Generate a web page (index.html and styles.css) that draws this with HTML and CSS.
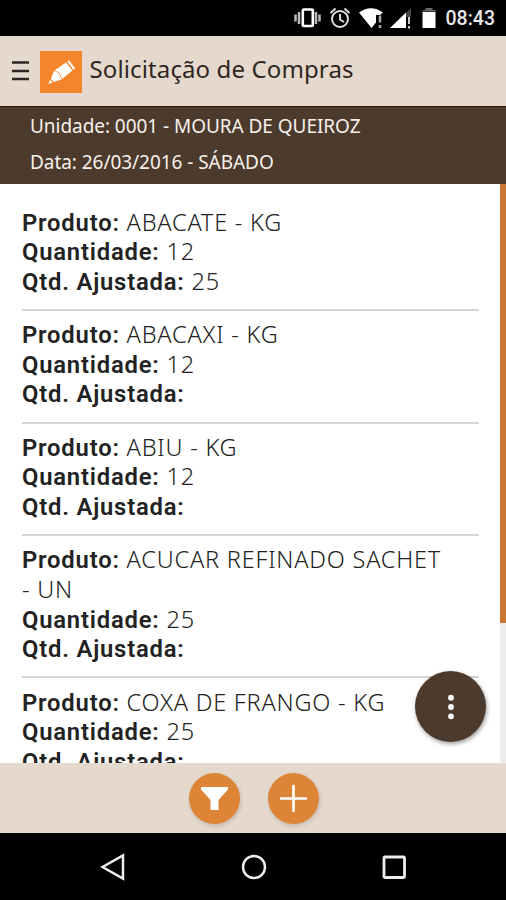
FILE: index.html
```html
<!DOCTYPE html>
<html lang="pt-BR">
<head>
    <meta charset="UTF-8">
    <meta name="viewport" content="width=device-width, initial-scale=1.0">
    <title>Solicitação de Compras</title>
    <link rel="stylesheet" href="styles.css">
</head>
<body>
    <div class="status-bar">
        <svg class="status-icons" width="146" height="36" viewBox="292 0 146 36">
            <!-- vibrate -->
            <path d="M295.500 14.500v7M299 12v12M316 12v12M319.500 14.500v7" stroke="#bbb" stroke-width="2.500"/>
            <rect x="302.800" y="9.500" width="10" height="16.500" rx="1" fill="none" stroke="#fff" stroke-width="2.600"/>
            <!-- alarm -->
            <g fill="none" stroke="#ddd" stroke-width="2">
                <circle cx="340" cy="19" r="8"/>
                <path d="M340 14v5.500l4 2.500M330.500 13l5-4.500M349.500 13l-5-4.500"/>
            </g>
            <!-- wifi -->
            <path d="M359 12.500Q371 4 383 12.500L380 15H376V22.500L371.500 28Z" fill="#fff"/>
            <path d="M380 15.500v7M380 25v3" stroke="#aaa" stroke-width="2.500"/>
            <!-- signal -->
            <path d="M411 8v9h-5v-4z" fill="#444"/>
            <path d="M390 28L406 12.500V28Z" fill="#fff"/>
            <path d="M409 17v7M409 26v2.500" stroke="#ccc" stroke-width="2"/>
            <!-- battery -->
            <path d="M422.500 11.500V10h3V8h7v2h3v1.500z" fill="#666"/>
            <path d="M422.500 12h13v16h-13z" fill="#fff"/>
        </svg>
        <span class="clock">08:43</span>
    </div>

    <div class="header">
        <svg class="menu" width="17" height="20" viewBox="0 0 17 20">
            <path d="M0 1.500h17M0 10h17M0 18h17" stroke="#2d2622" stroke-width="2.400"/>
        </svg>
        <div class="logo">
            <svg width="42" height="42" viewBox="0 0 42 42" fill="#fff">
                <path d="M8.500 33l1.500-4.500 2.500 3z"/>
                <path d="M11 27.500l3-7.500 4 1.500 2 3 1.500 4-8 2.500z"/>
                <path d="M14.500 19.500L26 11.500l6.500 8L22 28l-1.300-4-2.200-3z"/>
                <path d="M27.300 10.500l1.700-1.300 6.200 8.200-1.700 1.400z"/>
            </svg>
        </div>
        <h1 class="title">Solicitação de Compras</h1>
    </div>

    <div class="info">
        <p class="unit">Unidade: 0001 - MOURA DE QUEIROZ</p>
        <p class="date">Data: 26/03/2016 - SÁBADO</p>
    </div>

    <div class="content">
        <div class="list">
            <div class="item">
                <div><b>Produto:</b> ABACATE - KG</div>
                <div><b>Quantidade:</b> 12</div>
                <div><b>Qtd. Ajustada:</b> 25</div>
            </div>
            <div class="item">
                <div><b>Produto:</b> ABACAXI - KG</div>
                <div><b>Quantidade:</b> 12</div>
                <div><b>Qtd. Ajustada:</b></div>
            </div>
            <div class="item">
                <div><b>Produto:</b> ABIU - KG</div>
                <div><b>Quantidade:</b> 12</div>
                <div><b>Qtd. Ajustada:</b></div>
            </div>
            <div class="item">
                <div><b>Produto:</b> ACUCAR REFINADO SACHET - UN</div>
                <div><b>Quantidade:</b> 25</div>
                <div><b>Qtd. Ajustada:</b></div>
            </div>
            <div class="item">
                <div><b>Produto:</b> COXA DE FRANGO - KG</div>
                <div><b>Quantidade:</b> 25</div>
                <div><b>Qtd. Ajustada:</b></div>
            </div>
        </div>
        <div class="scrollbar"><div class="thumb"></div></div>
        <button class="more" aria-label="Mais">
            <svg width="8" height="28" viewBox="0 0 8 28" fill="#fff">
                <circle cx="4" cy="4.700" r="2.900"/>
                <circle cx="4" cy="14" r="2.900"/>
                <circle cx="4" cy="23.300" r="2.900"/>
            </svg>
        </button>
    </div>

    <div class="toolbar">
        <button class="round" aria-label="Filtrar">
            <svg width="51" height="51" viewBox="0 0 51 51">
                <path d="M12 14h27v2.500L29.500 27v10h-8V27L12 16.500z" fill="#fff"/>
            </svg>
        </button>
        <button class="round" aria-label="Adicionar">
            <svg width="51" height="51" viewBox="0 0 51 51">
                <path d="M25.500 13v25M13 25.500h25" stroke="#fff" stroke-width="2.600" stroke-linecap="round"/>
            </svg>
        </button>
    </div>

    <div class="nav-bar">
        <svg width="26" height="28" viewBox="0 0 26 28" fill="none" stroke="#eee" stroke-width="2.500">
            <path d="M2.500 14L23 2.500v23z"/>
        </svg>
        <svg width="26" height="28" viewBox="0 0 26 28" fill="none" stroke="#eee" stroke-width="2.500">
            <circle cx="13" cy="14" r="11"/>
        </svg>
        <svg width="26" height="28" viewBox="0 0 26 28" fill="none" stroke="#eee" stroke-width="2.800">
            <rect x="3" y="4" width="20.500" height="20.500" rx="1"/>
        </svg>
    </div>
</body>
</html>
```

FILE: styles.css
```css
* {
    box-sizing: border-box;
}
body {
    margin: 0;
    height: 900px;
    display: flex;
    flex-direction: column;
    overflow: hidden;
    background-color: #fff;
    font-family: "Noto Sans", sans-serif;
}
button {
    border: none;
    padding: 0;
    border-radius: 50%;
    display: flex;
    align-items: center;
    justify-content: center;
}
.status-bar {
    height: 36px;
    flex: none;
    display: flex;
    align-items: center;
    justify-content: flex-end;
    gap: 8px;
    padding-right: 11px;
    background-color: #000;
}
.clock {
    color: #e8e8e8;
    font: 500 19.5px/36px Roboto, sans-serif;
    padding-top: 2px;
}
.header {
    height: 70px;
    flex: none;
    display: flex;
    align-items: center;
    padding: 2px 0 0 12px;
    background-color: #e5d9ce;
}
.menu {
    margin-top: -2px;
}
.logo {
    width: 42px;
    height: 42px;
    margin-left: 11px;
    background-color: #f3852b;
}
.title {
    margin: -7px 0 0 7.5px;
    font-size: 24px;
    font-weight: 400;
    letter-spacing: 0.12px;
    color: #2d2622;
    white-space: nowrap;
}
.info {
    height: 78px;
    flex: none;
    padding: 1px 0 0 30px;
    background-color: #4c3a2d;
    border-top: 1px solid #291309;
    color: #f7f1ec;
    font-size: 19px;
    letter-spacing: -0.05px;
    line-height: 36px;
    white-space: nowrap;
}
.info p {
    margin: 0;
}
.content {
    position: relative;
    height: 579px;
    flex: none;
    display: flex;
    overflow: hidden;
}
.list {
    flex: 1;
    padding: 14px 21px 0 22px;
}
.item {
    padding: 9.2px 0 12.8px;
    border-bottom: 2px solid #d6d6d6;
    color: #222;
    font-size: 23.5px;
    font-weight: 300;
    letter-spacing: 0.8px;
    line-height: 29.55px;
}
.item:first-child {
    padding-top: 9.6px;
}
.item div {
    padding-right: 24px;
}
.item b {
    font-family: Roboto, sans-serif;
    font-weight: 600;
    font-size: 23.8px;
    letter-spacing: 0.8px;
    line-height: 1;
}
.scrollbar {
    width: 6px;
    background-color: #ededed;
}
.thumb {
    height: 439px;
    background-color: #c87832;
}
.more {
    position: absolute;
    right: 20px;
    bottom: 21px;
    width: 71px;
    height: 71px;
    background-color: #4c3a2d;
    box-shadow: 1px 2px 4px rgba(0, 0, 0, 0.4);
}
.toolbar {
    height: 70px;
    flex: none;
    display: flex;
    justify-content: center;
    align-items: center;
    gap: 28px;
    padding-left: 1px;
    background-color: #e5d9ce;
}
.round {
    width: 51px;
    height: 51px;
    background-color: #dd8436;
    box-shadow: 1px 2px 4px rgba(0, 0, 0, 0.15);
}
.nav-bar {
    flex: 1;
    display: flex;
    justify-content: space-between;
    align-items: center;
    padding: 0 99px 0 100px;
    background-color: #000;
}
```
